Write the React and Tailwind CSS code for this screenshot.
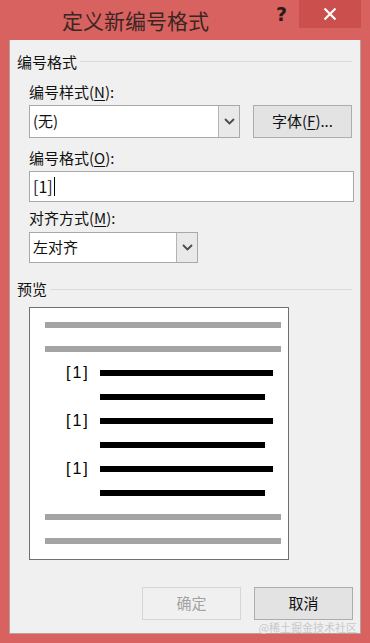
const FONT = { fontFamily: '"Microsoft YaHei", "Noto Sans CJK SC", "Noto Sans", sans-serif' };

function Chevron() {
  return (
    <svg width="11" height="7" viewBox="0 0 11 7" className="block">
      <path d="M1 1 L5.5 5.5 L10 1" fill="none" stroke="#4a4a4a" strokeWidth="1.8" />
    </svg>
  );
}

function Select({ value, width }) {
  return (
    <div className={`flex h-full ${width} border border-[#a9a9a9] bg-white`}>
      <div className="flex-1 flex items-center pl-[3px] text-[15px] text-[#111]">{value}</div>
      <div className="w-[21px] flex items-center justify-center bg-[#e9e9e9] border-l border-[#b4b4b4]">
        <Chevron />
      </div>
    </div>
  );
}

function Btn({ children, disabled }) {
  return (
    <button
      className={`w-[99px] h-full flex items-center justify-center text-[15px] border ${
        disabled
          ? 'bg-[#f0f0f0] border-[#d6d6d6] text-[#a2a2a2]'
          : 'bg-[#e3e3e3] border-[#adadad] text-[#111]'
      }`}
    >
      {children}
    </button>
  );
}

function Underline({ c }) {
  return <span className="underline underline-offset-2">{c}</span>;
}

function Bar({ kind }) {
  if (kind === 'gray') return <div className="h-[6px] w-[236px] ml-[15px] bg-[#a4a4a4]" />;
  return <div className={`h-[6px] ${kind === 'long' ? 'w-[173px]' : 'w-[165px]'} ml-[70px] bg-black`} />;
}

function NumRow() {
  return (
    <div className="h-[24px] flex items-center">
      <span
        className="w-[70px] pl-[36px] text-[16px] text-black tracking-[2px] leading-none"
        style={{ fontFamily: '"Liberation Sans", sans-serif' }}
      >
        [1]
      </span>
      <div className="h-[6px] w-[173px] bg-black" />
    </div>
  );
}

function Row({ kind }) {
  return (
    <div className="h-[24px] flex items-center">
      <Bar kind={kind} />
    </div>
  );
}

export default function App() {
  return (
    <div className="w-[370px] h-[643px] bg-[#d8625f] flex flex-col" style={FONT}>
      <div className="h-[40px] flex items-start">
        <div className="pl-[62px] pt-[5px] text-[21px] text-[#3b2624] leading-[30px]">定义新编号格式</div>
        <div
          className="ml-auto pt-[3px] mr-[12px] text-[19px] font-bold text-[#2a1a1a] leading-[22px]"
          style={{ fontFamily: '"DejaVu Sans", sans-serif' }}
        >
          ?
        </div>
        <div className="w-[62px] h-[28px] mr-[9px] bg-[#cb4f4d] flex items-center justify-center">
          <svg width="14" height="14" viewBox="0 0 14 14">
            <path d="M1.5 1.5 L12.5 12.5 M12.5 1.5 L1.5 12.5" stroke="#fff" strokeWidth="2.2" />
          </svg>
        </div>
      </div>

      <div className="mx-[9px] h-[594px] bg-[#f0f0f0] border border-[#b9a0a0] border-t-0 flex flex-col text-[#111]">
        <div className="h-[12px]" />
        <div className="h-[20px] flex items-center pl-[7px] text-[15px]">
          <span>编号格式</span>
          <div className="flex-1 h-px bg-[#dcdcdc] ml-[3px] mr-[8px]" />
        </div>

        <div className="mt-[10px] h-[20px] flex items-center pl-[19px] text-[15px]">
          编号样式(<Underline c="N" />):
        </div>
        <div className="mt-[3px] h-[33px] flex pl-[19px]">
          <Select value="(无)" width="w-[211px]" />
          <div className="ml-[13px]">
            <Btn>
              字体(<Underline c="F" />)...
            </Btn>
          </div>
        </div>

        <div className="mt-[10px] h-[20px] flex items-center pl-[19px] text-[15px]">
          编号格式(<Underline c="O" />):
        </div>
        <div className="mt-[3px] h-[31px] ml-[19px] w-[325px] border border-[#a9a9a9] bg-white flex items-center pl-[3px] text-[16px]">
          [1]<span className="inline-block w-px h-[19px] bg-black ml-[1px]" />
        </div>

        <div className="mt-[7px] h-[20px] flex items-center pl-[19px] text-[15px]">
          对齐方式(<Underline c="M" />):
        </div>
        <div className="mt-[3px] h-[32px] pl-[19px] flex">
          <Select value="左对齐" width="w-[169px]" />
        </div>

        <div className="mt-[16px] h-[20px] flex items-center pl-[7px] text-[15px]">
          <span>预览</span>
          <div className="flex-1 h-px bg-[#dcdcdc] ml-[3px] mr-[8px]" />
        </div>

        <div className="mt-[8px] ml-[19px] w-[260px] h-[254px] border border-[#707070] bg-white pt-[5px]">
          <Row kind="gray" />
          <Row kind="gray" />
          <NumRow />
          <Row kind="short" />
          <NumRow />
          <Row kind="short" />
          <NumRow />
          <Row kind="short" />
          <Row kind="gray" />
          <Row kind="gray" />
        </div>

        <div className="mt-[27px] h-[33px] flex pl-[132px] gap-[13px]">
          <Btn disabled>确定</Btn>
          <Btn>取消</Btn>
        </div>
        <div className="flex justify-end pr-[3px] mt-[1px] text-[11px] leading-[12px] text-[#c9c9c9]">@稀土掘金技术社区</div>
      </div>
    </div>
  );
}
